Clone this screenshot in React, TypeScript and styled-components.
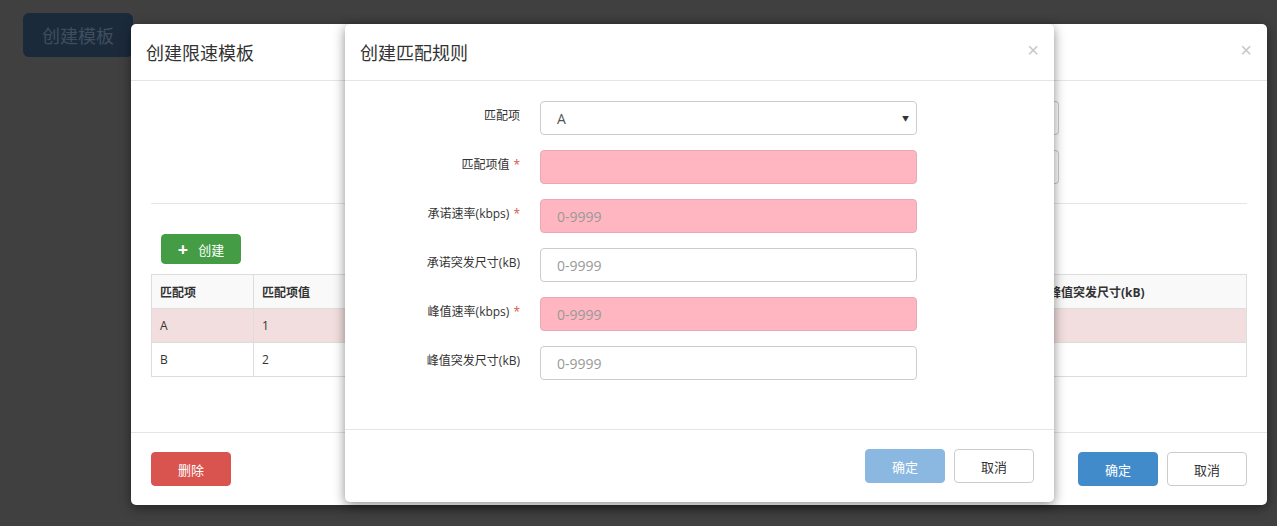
import styled, { createGlobalStyle } from 'styled-components'

const Global = createGlobalStyle`
  html, body { margin: 0; height: 100%; }
  body { background: #404040; font-family: "Open Sans", "Noto Sans CJK SC", sans-serif; color: #333; overflow: hidden; }
`

const Page = styled.div`
  position: relative;
  width: 1277px;
  height: 526px;
  padding: 13px 0 0 23px;
  box-sizing: border-box;
`

const BackButton = styled.div`
  width: 110px;
  height: 44px;
  border-radius: 6px;
  background: #1b2a3b;
  color: #3e4e5f;
  font-size: 18px;
  display: flex;
  align-items: center;
  justify-content: center;
`

const Modal = styled.div<{ $left: number; $width: number; $height: number }>`
  position: absolute;
  top: 24px;
  left: ${p => p.$left}px;
  width: ${p => p.$width}px;
  height: ${p => p.$height}px;
  background: #fff;
  border-radius: 5px;
  box-shadow: 0 3px 12px rgba(0, 0, 0, 0.45);
  display: flex;
  flex-direction: column;
  box-sizing: border-box;
  overflow: hidden;
`

const Header = styled.div`
  height: 56px;
  flex: none;
  border-bottom: 1px solid #e5e5e5;
  display: flex;
  align-items: center;
  justify-content: space-between;
  padding: 0 15px;
  font-size: 18px;
  color: #333;
`

const Close = styled.span`
  font-size: 20px;
  color: #c8c8c8;
  font-family: "Liberation Sans", sans-serif;
  margin-top: -4px;
`

const Body = styled.div`
  flex: 1;
  padding: 20px 20px 0;
  position: relative;
`

const Footer = styled.div`
  height: 72px;
  flex: none;
  border-top: 1px solid #e5e5e5;
  display: flex;
  align-items: center;
  padding: 0 20px;
  gap: 9px;
`

const Btn = styled.div<{ $bg: string; $fg?: string; $border?: string }>`
  width: 80px;
  height: 34px;
  box-sizing: border-box;
  border-radius: 4px;
  background: ${p => p.$bg};
  color: ${p => p.$fg || '#fff'};
  border: 1px solid ${p => p.$border || p.$bg};
  font-size: 13px;
  display: flex;
  align-items: center;
  justify-content: center;
  gap: 10px;
`

const Spacer = styled.div`flex: 1;`

const GhostInput = styled.div<{ $top: number }>`
  position: absolute;
  right: 208px;
  top: ${p => p.$top}px;
  width: 20px;
  height: 32px;
  border: 1px solid #ccc;
  border-left: none;
  border-radius: 0 4px 4px 0;
`

const Divider = styled.div`
  margin: 102px 0 30px;
  border-top: 1px solid #e5e5e5;
`

const Table = styled.table`
  width: 100%;
  border-collapse: collapse;
  margin-top: 10px;
  font-size: 12px;
  td, th { border: 1px solid #ddd; height: 33px; padding: 0 8px; text-align: left; }
  th { background: #f9f9f9; font-weight: bold; }
`

const Row = styled.tr<{ $danger?: boolean }>`
  background: ${p => (p.$danger ? '#f2dede' : '#fff')};
`

const Form = styled.div`
  display: flex;
  flex-direction: column;
  gap: 15px;
`

const Field = styled.div`
  display: grid;
  grid-template-columns: 155px 377px;
  column-gap: 20px;
`

const Label = styled.div`
  font-size: 12px;
  text-align: right;
  padding-top: 5px;
  color: #333;
`

const Star = styled.span`
  color: #d9534f;
  margin-left: 4px;
`

const Input = styled.div<{ $error?: boolean }>`
  height: 34px;
  box-sizing: border-box;
  border: 1px solid ${p => (p.$error ? '#e8a9b2' : '#ccc')};
  background: ${p => (p.$error ? '#ffb6c1' : '#fff')};
  border-radius: 4px;
  padding: 0 12px 0 16px;
  display: flex;
  align-items: center;
  justify-content: space-between;
  font-size: 14px;
  color: #999;
`

const Caret = styled.span`
  font-size: 7px;
  color: #333;
  margin-right: -5px;
`

const fields = [
  { label: '匹配项', value: 'A', select: true },
  { label: '匹配项值', req: true, error: true, value: '' },
  { label: '承诺速率(kbps)', req: true, error: true, value: '0-9999' },
  { label: '承诺突发尺寸(kB)', value: '0-9999' },
  { label: '峰值速率(kbps)', req: true, error: true, value: '0-9999' },
  { label: '峰值突发尺寸(kB)', value: '0-9999' },
]

export default function App() {
  return (
    <>
      <Global />
      <Page>
        <BackButton>创建模板</BackButton>
        <Modal $left={131} $width={1136} $height={481}>
          <Header>创建限速模板<Close>×</Close></Header>
          <Body>
            <GhostInput $top={20} />
            <GhostInput $top={69} />
            <Divider />
            <Btn $bg="#449d44" style={{ marginLeft: 10, height: 30 }}>
              <b style={{ fontSize: 18 }}>+</b>创建
            </Btn>
            <Table>
              <thead>
                <tr>
                  <th style={{ width: 85 }}>匹配项</th>
                  <th style={{ width: 770 }}>匹配项值</th>
                  <th>峰值突发尺寸(kB)</th>
                </tr>
              </thead>
              <tbody>
                <Row $danger><td>A</td><td>1</td><td /></Row>
                <Row><td>B</td><td>2</td><td /></Row>
              </tbody>
            </Table>
          </Body>
          <Footer>
            <Btn $bg="#d9534f">删除</Btn>
            <Spacer />
            <Btn $bg="#428bca">确定</Btn>
            <Btn $bg="#fff" $fg="#333" $border="#ccc">取消</Btn>
          </Footer>
        </Modal>
        <Modal $left={345} $width={709} $height={478}>
          <Header>创建匹配规则<Close>×</Close></Header>
          <Body>
            <Form>
              {fields.map(f => (
                <Field key={f.label}>
                  <Label>{f.label}{f.req && <Star>*</Star>}</Label>
                  <Input $error={f.error} style={f.select ? { color: '#555' } : undefined}>
                    {f.value}
                    {f.select && <Caret>▼</Caret>}
                  </Input>
                </Field>
              ))}
            </Form>
          </Body>
          <Footer>
            <Spacer />
            <Btn $bg="#8bb8e0">确定</Btn>
            <Btn $bg="#fff" $fg="#333" $border="#ccc">取消</Btn>
          </Footer>
        </Modal>
      </Page>
    </>
  )
}
